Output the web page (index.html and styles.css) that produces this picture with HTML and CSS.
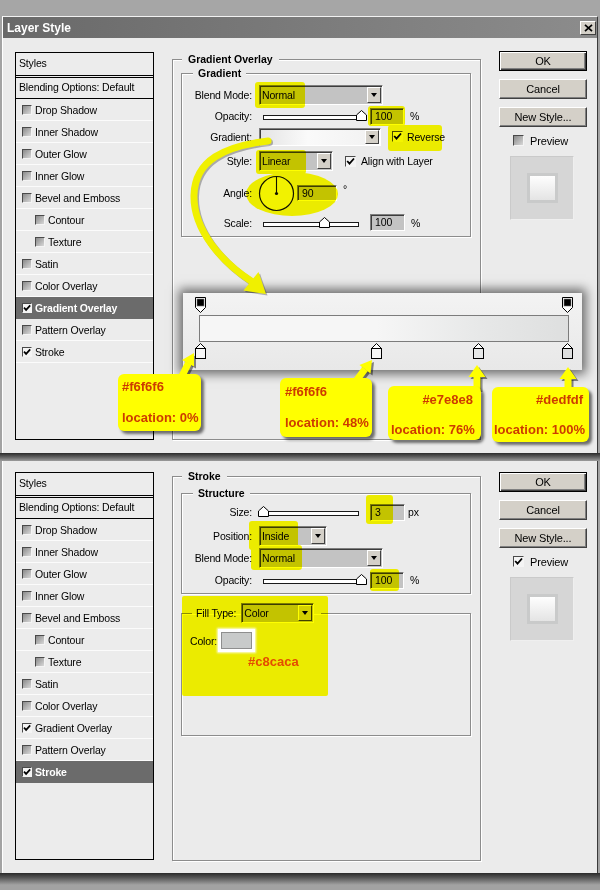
FILE: index.html
```html
<!DOCTYPE html>
<html>
<head>
<meta charset="utf-8">
<title>Layer Style</title>
<link rel="stylesheet" href="styles.css">
</head>
<body>
<div class="page">
  <div class="strip"></div>

  <div class="win win-a">
    <div class="titlebar">
      <span class="title">Layer Style</span>
      <span class="close"><svg width="9" height="8" viewBox="0 0 9 8"><path d="M1 0.8 L8 7.2 M8 0.8 L1 7.2" stroke="#000" stroke-width="1.7"/></svg></span>
    </div>
    <div class="dlg dlg-a">
      <div class="styles">
        <div class="st-head">Styles</div>
        <div class="st-blend">Blending Options: Default</div>
        <div class="st-item"><span class="cb"></span>Drop Shadow</div>
        <div class="st-item"><span class="cb"></span>Inner Shadow</div>
        <div class="st-item"><span class="cb"></span>Outer Glow</div>
        <div class="st-item"><span class="cb"></span>Inner Glow</div>
        <div class="st-item"><span class="cb"></span>Bevel and Emboss</div>
        <div class="st-item sub"><span class="cb"></span>Contour</div>
        <div class="st-item sub"><span class="cb"></span>Texture</div>
        <div class="st-item"><span class="cb"></span>Satin</div>
        <div class="st-item"><span class="cb"></span>Color Overlay</div>
        <div class="st-item cur"><span class="cb on"><svg width="8" height="8" viewBox="0 0 8 8"><path d="M1 3.6 L3.1 5.9 L7.2 1.4" fill="none" stroke="#000" stroke-width="1.7"/></svg></span>Gradient Overlay</div>
        <div class="st-item"><span class="cb"></span>Pattern Overlay</div>
        <div class="st-item"><span class="cb on"><svg width="8" height="8" viewBox="0 0 8 8"><path d="M1 3.6 L3.1 5.9 L7.2 1.4" fill="none" stroke="#000" stroke-width="1.7"/></svg></span>Stroke</div>
      </div>

      <div class="main">
        <fieldset class="grp outer outer-a">
          <legend>Gradient Overlay</legend>
          <fieldset class="grp inner grad">
            <legend>Gradient</legend>
            <div class="row r1">
              <span class="lbl">Blend Mode:</span>
              <div class="sel w-blend"><span class="sel-t">Normal</span><span class="dd"></span></div>
            </div>
            <div class="row r2">
              <span class="lbl">Opacity:</span>
              <div class="slider s-op"><div class="track"></div><span class="thumb" style="left:100%"><svg width="11" height="11" viewBox="0 0 11 11"><path d="M0.5 10.5 V5 L5.5 0.5 L10.5 5 V10.5 Z" fill="#fff" stroke="#000"/></svg></span></div>
              <div class="num n-op">100</div>
              <span class="unit">%</span>
            </div>
            <div class="row r3">
              <span class="lbl">Gradient:</span>
              <div class="gsel"><span class="gsw"></span><span class="dd"></span></div>
              <span class="cbx cb-rev"><svg width="9" height="9" viewBox="0 0 9 9"><path d="M1.2 4 L3.5 6.6 L8 1.5" fill="none" stroke="#000" stroke-width="1.8"/></svg></span>
              <span class="cbx-t">Reverse</span>
            </div>
            <div class="row r4">
              <span class="lbl">Style:</span>
              <div class="sel w-style"><span class="sel-t">Linear</span><span class="dd"></span></div>
              <span class="cbx cb-align"><svg width="9" height="9" viewBox="0 0 9 9"><path d="M1.2 4 L3.5 6.6 L8 1.5" fill="none" stroke="#000" stroke-width="1.8"/></svg></span>
              <span class="cbx-t">Align with Layer</span>
            </div>
            <div class="row r5">
              <span class="lbl">Angle:</span>
              <svg class="dial" width="37" height="37" viewBox="0 0 37 37"><circle cx="18.5" cy="18.5" r="17" fill="#f2f2f2" stroke="#111" stroke-width="1.2"/><path d="M18.5 18.5 V1.5" stroke="#111" stroke-width="1.1"/><circle cx="18.5" cy="18.5" r="1.6" fill="#111"/></svg>
              <div class="num n-ang">90</div>
              <span class="deg">°</span>
            </div>
            <div class="row r6">
              <span class="lbl">Scale:</span>
              <div class="slider s-sc"><div class="track"></div><span class="thumb" style="left:64%"><svg width="11" height="11" viewBox="0 0 11 11"><path d="M0.5 10.5 V5 L5.5 0.5 L10.5 5 V10.5 Z" fill="#fff" stroke="#000"/></svg></span></div>
              <div class="num n-sc">100</div>
              <span class="unit">%</span>
            </div>
          </fieldset>
        </fieldset>
      </div>

      <div class="side side-a">
        <div class="btn def">OK</div>
        <div class="btn">Cancel</div>
        <div class="btn">New Style...</div>
        <div class="prev-row"><span class="cbx"></span><span class="cbx-t">Preview</span></div>
        <div class="prev-box"><div class="prev-sq"></div></div>
      </div>
    </div>
  </div>

  <div class="gap"></div>

  <div class="win win-b">
    <div class="dlg dlg-b">
      <div class="styles">
        <div class="st-head">Styles</div>
        <div class="st-blend">Blending Options: Default</div>
        <div class="st-item"><span class="cb"></span>Drop Shadow</div>
        <div class="st-item"><span class="cb"></span>Inner Shadow</div>
        <div class="st-item"><span class="cb"></span>Outer Glow</div>
        <div class="st-item"><span class="cb"></span>Inner Glow</div>
        <div class="st-item"><span class="cb"></span>Bevel and Emboss</div>
        <div class="st-item sub"><span class="cb"></span>Contour</div>
        <div class="st-item sub"><span class="cb"></span>Texture</div>
        <div class="st-item"><span class="cb"></span>Satin</div>
        <div class="st-item"><span class="cb"></span>Color Overlay</div>
        <div class="st-item"><span class="cb on"><svg width="8" height="8" viewBox="0 0 8 8"><path d="M1 3.6 L3.1 5.9 L7.2 1.4" fill="none" stroke="#000" stroke-width="1.7"/></svg></span>Gradient Overlay</div>
        <div class="st-item"><span class="cb"></span>Pattern Overlay</div>
        <div class="st-item cur"><span class="cb on"><svg width="8" height="8" viewBox="0 0 8 8"><path d="M1 3.6 L3.1 5.9 L7.2 1.4" fill="none" stroke="#000" stroke-width="1.7"/></svg></span>Stroke</div>
      </div>

      <div class="main">
        <fieldset class="grp outer outer-b">
          <legend>Stroke</legend>
          <fieldset class="grp inner struct">
            <legend>Structure</legend>
            <div class="row q1">
              <span class="lbl">Size:</span>
              <div class="slider s-sc"><div class="track"></div><span class="thumb" style="left:1%"><svg width="11" height="11" viewBox="0 0 11 11"><path d="M0.5 10.5 V5 L5.5 0.5 L10.5 5 V10.5 Z" fill="#fff" stroke="#000"/></svg></span></div>
              <div class="num n-sc">3</div>
              <span class="unit u-px">px</span>
            </div>
            <div class="row q2">
              <span class="lbl">Position:</span>
              <div class="sel w-pos"><span class="sel-t">Inside</span><span class="dd"></span></div>
            </div>
            <div class="row q3">
              <span class="lbl">Blend Mode:</span>
              <div class="sel w-blend"><span class="sel-t">Normal</span><span class="dd"></span></div>
            </div>
            <div class="row q4">
              <span class="lbl">Opacity:</span>
              <div class="slider s-op"><div class="track"></div><span class="thumb" style="left:100%"><svg width="11" height="11" viewBox="0 0 11 11"><path d="M0.5 10.5 V5 L5.5 0.5 L10.5 5 V10.5 Z" fill="#fff" stroke="#000"/></svg></span></div>
              <div class="num n-op">100</div>
              <span class="unit">%</span>
            </div>
          </fieldset>
          <fieldset class="grp inner fill">
            <legend><span class="fill-leg"><span>Fill Type:</span><span class="sel w-fill"><span class="sel-t">Color</span><span class="dd"></span></span></span></legend>
            <div class="color-row">
              <span class="color-l">Color:</span>
              <span class="swatch"></span>
            </div>
            <div class="hexnote">#c8caca</div>
          </fieldset>
        </fieldset>
      </div>

      <div class="side side-b">
        <div class="btn def">OK</div>
        <div class="btn">Cancel</div>
        <div class="btn">New Style...</div>
        <div class="prev-row"><span class="cbx on"><svg width="9" height="9" viewBox="0 0 9 9"><path d="M1.2 4 L3.5 6.6 L8 1.5" fill="none" stroke="#000" stroke-width="1.8"/></svg></span><span class="cbx-t">Preview</span></div>
        <div class="prev-box"><div class="prev-sq"></div></div>
      </div>
    </div>
  </div>

  <div class="strip-bot"></div>

  <!-- yellow highlight marks -->
  <div class="hl hl-1"></div>
  <div class="hl hl-2"></div>
  <div class="hl hl-3"></div>
  <div class="hl hl-4"></div>
  <div class="hl hl-5"></div>
  <div class="hl hl-6"></div>
  <div class="hl hl-7"></div>
  <div class="hl hl-8"></div>
  <div class="hl hl-9"></div>
  <div class="hl hl-10"></div>

  <!-- gradient editor excerpt -->
  <div class="ged">
    <div class="ged-stops top">
      <span class="stop" style="left:0%"><svg width="11" height="16" viewBox="0 0 11 16"><path d="M0.5 0.5 H10.5 V10.5 L5.5 15.5 L0.5 10.5 Z" fill="#fff" stroke="#000"/><rect x="2" y="2" width="7" height="7" fill="#000" stroke="#777" stroke-width="0.6"/></svg></span>
      <span class="stop" style="left:100%"><svg width="11" height="16" viewBox="0 0 11 16"><path d="M0.5 0.5 H10.5 V10.5 L5.5 15.5 L0.5 10.5 Z" fill="#fff" stroke="#000"/><rect x="2" y="2" width="7" height="7" fill="#000" stroke="#777" stroke-width="0.6"/></svg></span>
    </div>
    <div class="ged-bar"></div>
    <div class="ged-stops bot">
      <span class="stop" style="left:0%"><svg width="11" height="16" viewBox="0 0 11 16"><path d="M5.5 0.5 L10.5 5.5 H0.5 Z" fill="#fff" stroke="#000"/><rect x="0.5" y="5.5" width="10" height="10" fill="#f6f6f6" stroke="#000"/></svg></span>
      <span class="stop" style="left:48%"><svg width="11" height="16" viewBox="0 0 11 16"><path d="M5.5 0.5 L10.5 5.5 H0.5 Z" fill="#fff" stroke="#000"/><rect x="0.5" y="5.5" width="10" height="10" fill="#f6f6f6" stroke="#000"/></svg></span>
      <span class="stop" style="left:76%"><svg width="11" height="16" viewBox="0 0 11 16"><path d="M5.5 0.5 L10.5 5.5 H0.5 Z" fill="#fff" stroke="#000"/><rect x="0.5" y="5.5" width="10" height="10" fill="#e7e8e8" stroke="#000"/></svg></span>
      <span class="stop" style="left:100%"><svg width="11" height="16" viewBox="0 0 11 16"><path d="M5.5 0.5 L10.5 5.5 H0.5 Z" fill="#fff" stroke="#000"/><rect x="0.5" y="5.5" width="10" height="10" fill="#dedfdf" stroke="#000"/></svg></span>
    </div>
  </div>

  <!-- annotation arrows -->
  <svg class="arrows" width="600" height="460" viewBox="0 0 600 460">
    <g fill="none" stroke-linecap="round">
      <path d="M268 141 C225 146 195 160 194 195 C193 230 222 262 251 281" stroke="rgba(0,0,0,0.28)" stroke-width="7" transform="translate(1.5 1.5)"/>
      <path d="M268 141 C225 146 195 160 194 195 C193 230 222 262 251 281" stroke="#f0f000" stroke-width="7"/>
    </g>
    <polygon points="266,294 243.5,290.5 258.5,272" fill="rgba(0,0,0,0.28)" transform="translate(1.5 1.5)"/>
    <polygon points="266,294 243.5,290.5 258.5,272" fill="#f0f000"/>

    <g transform="translate(2 2)" fill="rgba(0,0,0,0.45)" stroke="rgba(0,0,0,0.45)">
      <path d="M180 380 L188.5 363" stroke-width="7" fill="none"/>
      <polygon points="194,353 194,366.5 182,360" stroke="none"/>
      <path d="M356 381 L365 369" stroke-width="7" fill="none"/>
      <polygon points="372,360 370.5,373.5 359.5,365" stroke="none"/>
      <path d="M477 390 L477 376" stroke-width="7" fill="none"/>
      <polygon points="477,365 485.5,377 468.5,377" stroke="none"/>
      <path d="M568 390 L568 378" stroke-width="7" fill="none"/>
      <polygon points="568,367 576.5,379 559.5,379" stroke="none"/>
    </g>
    <g fill="#ffff00" stroke="#ffff00">
      <path d="M180 380 L188.5 363" stroke-width="7" fill="none"/>
      <polygon points="194,353 194,366.5 182,360" stroke="none"/>
      <path d="M356 381 L365 369" stroke-width="7" fill="none"/>
      <polygon points="372,360 370.5,373.5 359.5,365" stroke="none"/>
      <path d="M477 390 L477 376" stroke-width="7" fill="none"/>
      <polygon points="477,365 485.5,377 468.5,377" stroke="none"/>
      <path d="M568 390 L568 378" stroke-width="7" fill="none"/>
      <polygon points="568,367 576.5,379 559.5,379" stroke="none"/>
    </g>
  </svg>

  <!-- callouts -->
  <div class="co co1"><span>#f6f6f6</span><span>location: 0%</span></div>
  <div class="co co2"><span>#f6f6f6</span><span>location: 48%</span></div>
  <div class="co co3"><span class="co-r">#e7e8e8</span><span>location: 76%</span></div>
  <div class="co co4"><span class="co-r">#dedfdf</span><span>location: 100%</span></div>
</div>
</body>
</html>
```

FILE: styles.css
```css
* { box-sizing: border-box; }
html, body { margin: 0; padding: 0; }
body {
  background: #a3a3a3;
  font-family: "Liberation Sans", Arial, sans-serif;
  font-size: 10.5px;
  letter-spacing: -0.15px;
  color: #000;
}
.page { position: relative; width: 600px; height: 890px; overflow: hidden; }

.strip { height: 16px; background: #a6a6a6; }
.gap { height: 8px; background: linear-gradient(#2a2a2a, #555 40%, #9c9c9c); }
.strip-bot { height: 17px; background: linear-gradient(#2a2a2a, #5a5a5a 30%, #a2a2a2 70%); }

.win {
  margin: 0 2px;
  border-left: 1px solid #fff;
  border-right: 1px solid #3a3a3a;
  background: #ebebeb;
}
.win-a { border-top: 1px solid #f2f2f2; }

.titlebar {
  height: 21px;
  background: linear-gradient(to right, #696969, #8c8c8c);
  display: flex;
  align-items: center;
  justify-content: space-between;
  padding: 0 1px 0 4px;
}
.title { color: #fff; font-weight: bold; font-size: 12px; letter-spacing: 0; }
.close {
  width: 16px; height: 14px;
  background: #d4d0c8;
  border: 1px solid;
  border-color: #fff #404040 #404040 #fff;
  display: flex; align-items: center; justify-content: center;
}

.dlg { display: flex; align-items: flex-start; padding-left: 12px; }
.dlg-a { height: 415px; padding-top: 14px; }
.dlg-b { height: 412px; padding-top: 11px; }

/* styles list */
.styles {
  width: 139px; height: 388px;
  border: 1px solid #000;
  background: #ececec;
  flex: none;
}
.st-head { height: 25px; border-bottom: 3px double #000; padding-left: 3px; line-height: 21px; }
.st-blend { height: 21px; border-bottom: 1px solid #000; padding-left: 3px; line-height: 19px; }
.st-item {
  height: 22px;
  border-bottom: 1px solid #fbfbfb;
  display: flex; align-items: center;
  padding-left: 6px;
}
.st-item.sub { padding-left: 19px; }
.st-item.cur { background: #6b6b6b; color: #fff; font-weight: bold; border-bottom-color: #6b6b6b; }

.cb {
  width: 10px; height: 10px; flex: none;
  margin-right: 3px;
  border: 1px solid;
  border-color: #4a4a4a #f4f4f4 #f4f4f4 #4a4a4a;
  background: linear-gradient(135deg, #8a8a8a, #d8d8d8);
  display: flex; align-items: center; justify-content: center;
}
.cb.on { background: #f4f4f4; }
.cb svg, .cbx svg { display: block; }

/* group boxes */
fieldset.grp {
  margin: 0; padding: 0;
  border: 1px solid #8c8c8c;
  box-shadow: inset 1px 1px 0 #fff, 1px 1px 0 #fff;
  min-width: 0;
}
fieldset.grp > legend {
  font-weight: bold;
  line-height: 14px;
  padding: 0 6px;
  margin-left: 9px;
  background: #ebebeb;
  letter-spacing: 0;
}
.main { margin-left: 18px; width: 309px; flex: none; }
.outer-a { height: 388px; }
fieldset.outer-b { height: 392px; margin-top: -3px; }
fieldset.inner { margin: 0 9px 0 8px; }
fieldset.inner > legend { margin-left: 11px; padding: 0 5px; }
fieldset.grad { padding: 5px 0 5px; }
fieldset.struct { margin-top: 3px; padding: 3px 0 4px; }
fieldset.fill { margin-top: 9px; height: 133px; }
fieldset.fill > legend { margin-left: 10px; padding: 0 7px 0 4px; font-weight: normal; background: transparent; letter-spacing: -0.15px; }
.fill-leg { display: flex; align-items: center; height: 20px; gap: 5px; }

.row { display: flex; align-items: center; }
.lbl { width: 70px; text-align: right; margin-right: 7px; flex: none; }
.r1 { height: 20px; }
.r2 { height: 18px; margin-top: 2px; }
.r3 { height: 19px; margin-top: 2px; }
.r4 { height: 20px; margin-top: 5px; }
.r5 { height: 36px; margin-top: 4px; }
.r6 { height: 17px; margin-top: 3px; }
.q1 { height: 18px; }
.q2 { height: 20px; margin-top: 5px; }
.q3 { height: 20px; margin-top: 2px; }
.q4 { height: 18px; margin-top: 3px; }

/* controls */
.sel {
  display: flex;
  height: 20px;
  border: 1px solid;
  border-color: #7e7e7e #fff #fff #7e7e7e;
  box-shadow: inset 1px 1px 0 #3c3c3c;
  background: #c3c3c3;
  flex: none;
}
.sel-t { flex: 1; padding-left: 2px; padding-top: 1px; line-height: 17px; }
.w-blend { width: 124px; }
.w-style { width: 74px; }
.w-pos { width: 68px; }
.w-fill { width: 73px; }
.dd {
  width: 14px;
  margin: 1px 1px 1px 0;
  background: #d4d0c8;
  border: 1px solid;
  border-color: #fff #404040 #404040 #fff;
  display: flex; align-items: center; justify-content: center;
}
.dd::after {
  content: "";
  border-left: 3.5px solid transparent;
  border-right: 3.5px solid transparent;
  border-top: 4px solid #000;
}

.num {
  height: 17px;
  border: 1px solid;
  border-color: #7e7e7e #fff #fff #7e7e7e;
  box-shadow: inset 1px 1px 0 #3c3c3c;
  background: #c3c3c3;
  padding-left: 4px;
  line-height: 15px;
  flex: none;
}
.n-op { width: 34px; margin-left: 9px; }
.n-sc { width: 35px; margin-left: 11px; }
.n-ang { width: 40px; height: 16px; line-height: 14px; margin-left: 2px; }
.unit { margin-left: 6px; }
.u-px { margin-left: 3px; }
.deg { margin-left: 6px; margin-bottom: 8px; }

.slider { position: relative; height: 12px; margin-left: 4px; flex: none; }
.s-op { width: 98px; }
.s-sc { width: 96px; }
.track { margin-top: 5px; height: 5px; border: 1px solid #1a1a1a; background: #fff; }
.thumb { position: absolute; top: 0; margin-left: -5.5px; width: 11px; height: 11px; }
.thumb svg { display: block; }

.gsel {
  display: flex;
  width: 122px; height: 18px;
  border: 1px solid;
  border-color: #7e7e7e #fff #fff #7e7e7e;
  box-shadow: inset 1px 1px 0 #3c3c3c;
  background: #fff;
  flex: none;
}
.gsw { flex: 1; margin: 1px 0 0 1px; background: linear-gradient(to right, #e4e4e4, #fafafa 45%, #f3f3f3); }

.cbx {
  width: 11px; height: 11px; flex: none;
  border: 1px solid;
  border-color: #4a4a4a #f4f4f4 #f4f4f4 #4a4a4a;
  background: linear-gradient(135deg, #8a8a8a, #d8d8d8);
  display: flex; align-items: center; justify-content: center;
}
.cb-rev, .cb-align, .cbx.on { background: #f4f4f4; }
.cb-rev { margin-left: 11px; }
.cb-align { margin-left: 12px; }
.cbx-t { margin-left: 4px; }
.cb-align + .cbx-t { margin-left: 5px; }

.dial { display: block; margin-left: -1px; flex: none; }

.color-row { display: flex; align-items: center; height: 19px; margin-top: 8px; padding-left: 8px; }
.swatch {
  position: relative; z-index: 1;
  width: 31px; height: 17px;
  margin-left: 4px;
  background: #c8caca;
  border: 1px solid #8e8e8e;
  box-shadow: 0 0 0 3px #fff, 0 0 2px 4px rgba(255,255,255,0.85);
}
.hexnote {
  margin: 4px 0 0 66px;
  line-height: 16px;
  font-size: 13px; font-weight: bold; letter-spacing: 0;
  color: #e44c00;
}

/* side column */
.side { margin-left: 18px; width: 88px; flex: none; }
.side-a { margin-top: -1px; }
.btn {
  height: 20px;
  background: #d4d0c8;
  border: 1px solid;
  border-color: #fff #404040 #404040 #fff;
  box-shadow: inset -1px -1px 0 #808080;
  display: flex; align-items: center; justify-content: center;
  font-size: 11px;
}
.btn + .btn { margin-top: 8px; }
.btn.def {
  border-color: #000;
  box-shadow: inset 1px 1px 0 #fff, inset -1px -1px 0 #404040, inset -2px -2px 0 #808080;
}
.prev-row { display: flex; align-items: center; margin: 8px 0 0 14px; height: 11px; font-size: 11px; }
.prev-row .cbx-t { margin-left: 6px; }
.prev-box {
  width: 64px; height: 64px;
  margin: 10px 0 0 11px;
  background: #d6d6d6;
  border: 1px solid;
  border-color: #cacaca #efefef #efefef #cacaca;
  display: flex; align-items: center; justify-content: center;
}
.prev-sq {
  width: 31px; height: 30px;
  border: 3px solid #c9caca;
  background: linear-gradient(#fefefe, #e4e4e4);
}

/* yellow highlight marks */
.hl { position: absolute; background: #ffff00; mix-blend-mode: multiply; border-radius: 3px; }
.hl-1 { left: 255px; top: 82px; width: 50px; height: 26px; }
.hl-2 { left: 368px; top: 106px; width: 37px; height: 20px; }
.hl-3 { left: 388px; top: 125px; width: 54px; height: 26px; }
.hl-4 { left: 256px; top: 150px; width: 50px; height: 24px; }
.hl-5 { left: 246px; top: 172px; width: 92px; height: 44px; border-radius: 50%; }
.hl-6 { left: 366px; top: 495px; width: 27px; height: 29px; }
.hl-7 { left: 249px; top: 521px; width: 49px; height: 29px; }
.hl-8 { left: 251px; top: 545px; width: 51px; height: 25px; }
.hl-9 { left: 370px; top: 569px; width: 29px; height: 22px; }
.hl-10 { left: 182px; top: 596px; width: 146px; height: 100px; border-radius: 2px; }

/* gradient editor excerpt */
.ged {
  position: absolute;
  left: 183px; top: 293px;
  width: 399px; height: 77px;
  background: linear-gradient(#f3f3f3, #e8e8e8);
  box-shadow: 0 0 10px 4px rgba(0,0,0,0.55);
  padding: 4px 13px 0 16px;
}
.ged-stops { position: relative; height: 18px; margin: 0 2px 0 1px; }
.ged-stops.bot { height: 16px; margin-top: 1px; }
.stop { position: absolute; top: 0; margin-left: -5.5px; width: 11px; height: 16px; }
.stop svg { display: block; }
.ged-bar {
  height: 27px;
  border: 1px solid #7c7c7c;
  background: linear-gradient(to right, #f6f6f6 0%, #f6f6f6 48%, #e7e8e8 76%, #dedfdf 100%);
}

.arrows { position: absolute; left: 0; top: 0; pointer-events: none; }

/* callouts */
.co {
  position: absolute;
  background: #ffff00;
  border-radius: 6px;
  box-shadow: 3px 3px 3px rgba(0,0,0,0.55);
  color: #cd3b00;
  font-family: "Liberation Sans", Arial, sans-serif;
  font-weight: bold;
  font-size: 13px;
  letter-spacing: 0;
  line-height: 16px;
  display: flex;
  flex-direction: column;
  justify-content: space-between;
  white-space: nowrap;
}
.co-r { text-align: right; }
.co1 { left: 118px; top: 374px; width: 83px; height: 57px; padding: 5px 3px 5px 4px; }
.co2 { left: 280px; top: 378px; width: 92px; height: 59px; padding: 6px 3px 6px 5px; }
.co3 { left: 388px; top: 386px; width: 93px; height: 54px; padding: 6px 8px 2px 3px; }
.co4 { left: 492px; top: 387px; width: 97px; height: 55px; padding: 5px 6px 4px 2px; }
```
